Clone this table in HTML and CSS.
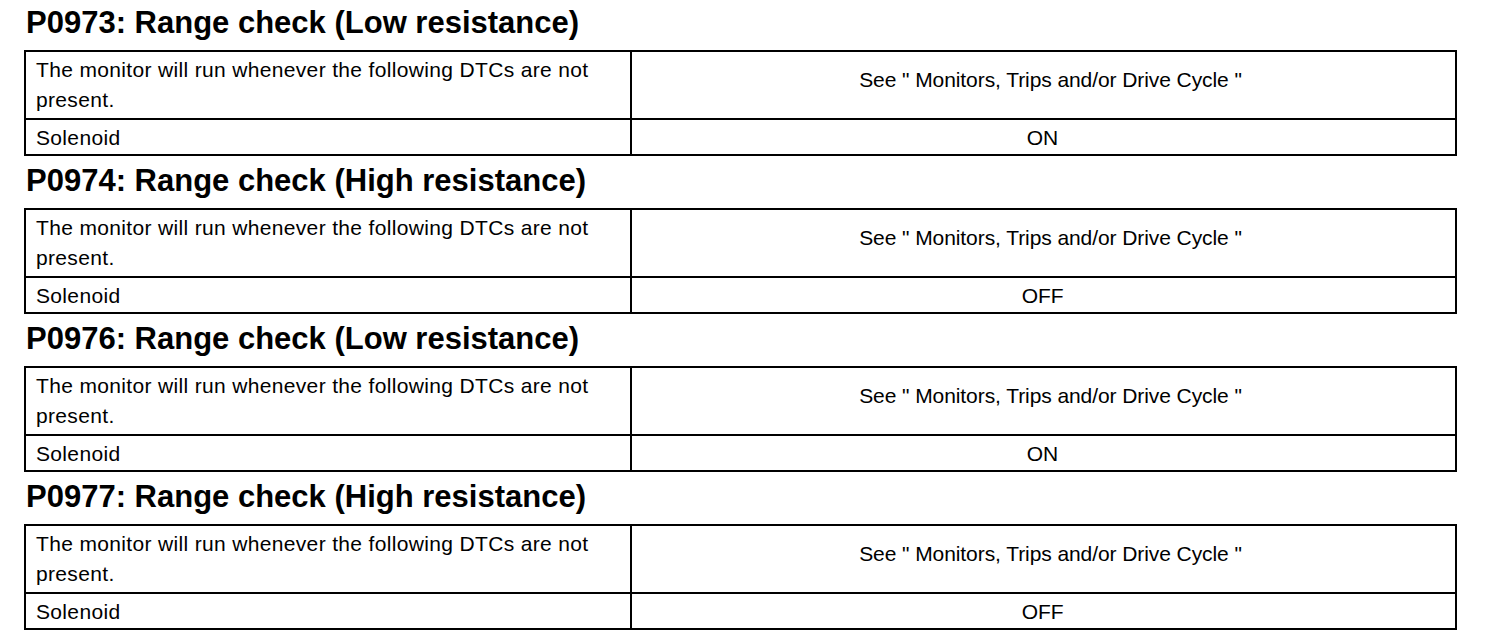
FILE: index.html
```html
<!DOCTYPE html>
<html>
<head>
<meta charset="utf-8">
<link rel="stylesheet" href="styles.css">
</head>
<body>
<div class="page">
  <section class="block">
    <h2 class="title">P0973: Range check (Low resistance)</h2>
    <table class="grid">
      <colgroup><col class="col1"><col class="col2"></colgroup>
      <tr class="r1"><td class="c1">The monitor will run whenever the following DTCs are not present.</td><td class="c2">See " Monitors, Trips and/or Drive Cycle "</td></tr>
      <tr class="r2"><td class="c1">Solenoid</td><td class="c2">ON</td></tr>
    </table>
  </section>
  <section class="block">
    <h2 class="title">P0974: Range check (High resistance)</h2>
    <table class="grid">
      <colgroup><col class="col1"><col class="col2"></colgroup>
      <tr class="r1"><td class="c1">The monitor will run whenever the following DTCs are not present.</td><td class="c2">See " Monitors, Trips and/or Drive Cycle "</td></tr>
      <tr class="r2"><td class="c1">Solenoid</td><td class="c2">OFF</td></tr>
    </table>
  </section>
  <section class="block">
    <h2 class="title">P0976: Range check (Low resistance)</h2>
    <table class="grid">
      <colgroup><col class="col1"><col class="col2"></colgroup>
      <tr class="r1"><td class="c1">The monitor will run whenever the following DTCs are not present.</td><td class="c2">See " Monitors, Trips and/or Drive Cycle "</td></tr>
      <tr class="r2"><td class="c1">Solenoid</td><td class="c2">ON</td></tr>
    </table>
  </section>
  <section class="block">
    <h2 class="title">P0977: Range check (High resistance)</h2>
    <table class="grid">
      <colgroup><col class="col1"><col class="col2"></colgroup>
      <tr class="r1"><td class="c1">The monitor will run whenever the following DTCs are not present.</td><td class="c2">See " Monitors, Trips and/or Drive Cycle "</td></tr>
      <tr class="r2"><td class="c1">Solenoid</td><td class="c2">OFF</td></tr>
    </table>
  </section>
</div>
</body>
</html>
```
FILE: styles.css
```css
html, body {
  margin: 0;
  padding: 0;
  background: #fff;
}
body {
  font-family: "Liberation Sans", Arial, sans-serif;
  color: #000;
}
.page {
  padding: 0 0 0 24px;
  width: 1432px;
}
.block {
  display: flex;
  flex-direction: column;
  margin-bottom: 2px;
}
.title {
  margin: 0;
  padding: 5px 0 0 2px;
  font-size: 31px;
  font-weight: bold;
  line-height: 36px;
  height: 45px;
}
.grid {
  width: 1431px;
  border-collapse: collapse;
  table-layout: fixed;
  border: 2px solid #000;
}
.col1 {
  width: 606px;
}
.col2 {
  width: 825px;
}
.grid td {
  border: 2px solid #000;
  font-size: 21px;
  line-height: 30px;
  vertical-align: top;
}
.c1 {
  padding: 3px 8px 3px 10px;
  letter-spacing: 0.34px;
}
.c2 {
  text-align: center;
  padding: 13px 10px 0 24px;
  letter-spacing: -0.08px;
}
.r2 td {
  padding-top: 3px;
  padding-bottom: 1px;
}
.r2 .c2 {
  padding-left: 8px;
  padding-right: 10px;
}
```
